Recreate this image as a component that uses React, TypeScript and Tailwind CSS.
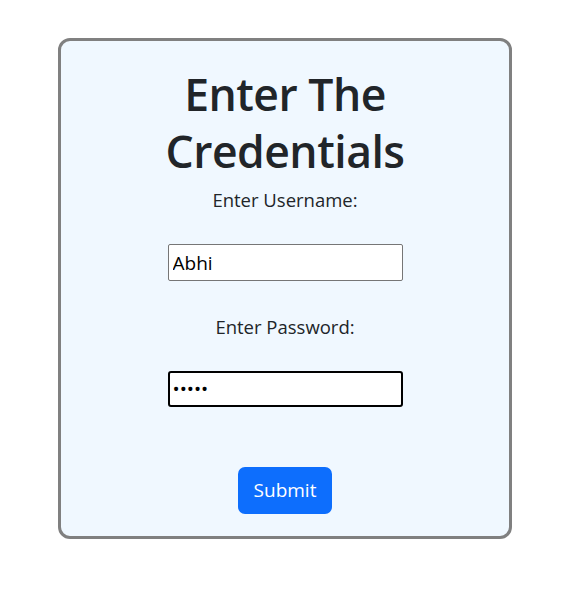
export default function App() {
  return (
    <div className="min-h-[596px] w-[566px] bg-white pt-[38px] font-['Open_Sans',sans-serif] text-[#212529]">
      <form
        className="ml-[58px] flex w-[454px] flex-col items-center rounded-[12px] border-[3px] border-[#808080] bg-[#f0f8ff] px-6 pt-[24px] pb-[22px]"
        onSubmit={(e) => e.preventDefault()}
      >
        <h1 className="text-center text-[44.5px] leading-[57px] font-semibold tracking-[-0.5px]">
          Enter The
          <br />
          Credentials
        </h1>

        <label htmlFor="username" className="mt-[6px] text-[18.5px] leading-[30px]">
          Enter Username:
        </label>
        <input
          id="username"
          type="text"
          defaultValue="Abhi"
          className="mt-[29px] h-[37px] w-[235px] rounded-[2px] border border-[#767676] bg-white px-[4px] text-[19px] text-black outline-none"
        />

        <label htmlFor="password" className="mt-[31px] text-[18.5px] leading-[30px]">
          Enter Password:
        </label>
        <input
          id="password"
          type="password"
          defaultValue="abcde"
          autoFocus
          className="mt-[29px] h-[36px] w-[235px] rounded-[3px] border-2 border-black bg-white px-[3px] text-[19px] text-black caret-black outline-none"
        />

        <button
          type="submit"
          className="mt-[60px] h-[47px] w-[94px] rounded-[7px] bg-[#0d6efd] text-[19px] text-white"
        >
          Submit
        </button>
      </form>
    </div>
  );
}
